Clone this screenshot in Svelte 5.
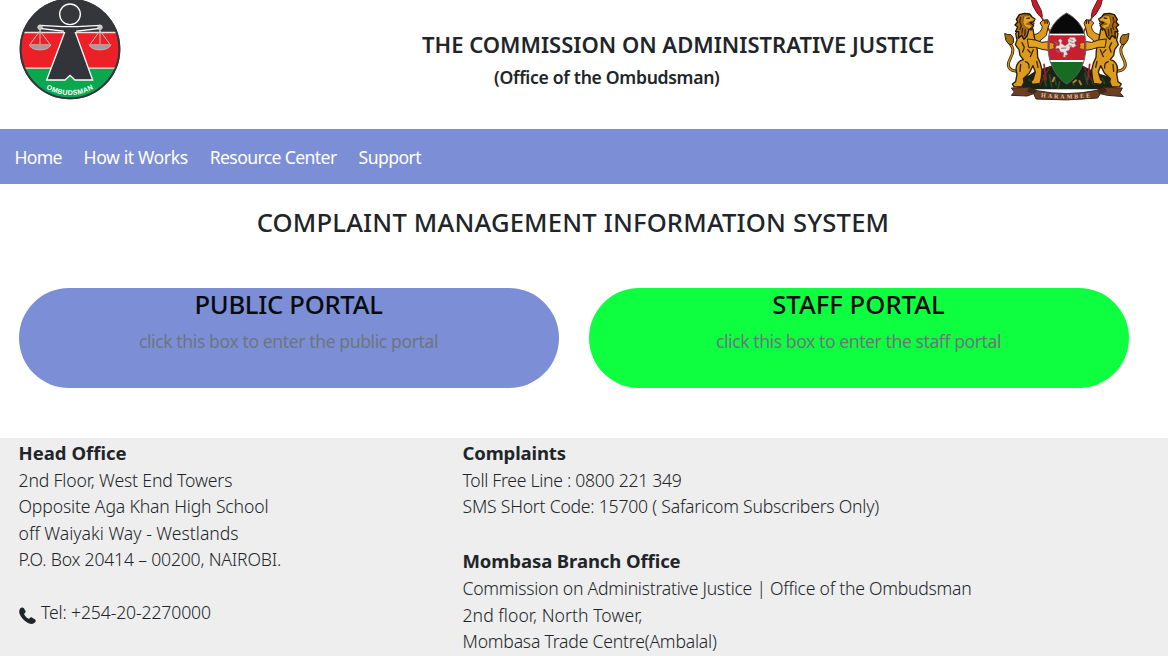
<script>
  const nav = [
    { label: 'Home', ls: -0.75 },
    { label: 'How it Works', ls: -0.4 },
    { label: 'Resource Center', ls: -0.62 },
    { label: 'Support', ls: -0.55 }
  ];

  const portals = [
    { kind: 'public', title: 'PUBLIC PORTAL', tls: -0.28, note: 'click this box to enter the public portal', ls: -0.41 },
    { kind: 'staff', title: 'STAFF PORTAL', tls: 0.05, note: 'click this box to enter the staff portal', ls: -0.44 }
  ];

  const columns = [
    [
      {
        title: 'Head Office',
        tls: 0.02,
        lines: [
          { text: '2nd Floor, West End Towers', ls: -0.14 },
          { text: 'Opposite Aga Khan High School', ls: -0.14 },
          { text: 'off Waiyaki Way - Westlands', ls: 0 },
          { text: 'P.O. Box 20414 – 00200, NAIROBI.', ls: -0.19 },
          { text: '', ls: 0 },
          { text: 'Tel: +254-20-2270000', ls: -0.14, phone: true }
        ]
      }
    ],
    [
      {
        title: 'Complaints',
        tls: -0.12,
        lines: [
          { text: 'Toll Free Line : 0800 221 349', ls: -0.28 },
          { text: 'SMS SHort Code: 15700 ( Safaricom Subscribers Only)', ls: -0.22 },
          { text: '', ls: 0 }
        ]
      },
      {
        title: 'Mombasa Branch Office',
        tls: -0.08,
        lines: [
          { text: 'Commission on Administrative Justice | Office of the Ombudsman', ls: -0.24 },
          { text: '2nd floor, North Tower,', ls: 0.05 },
          { text: 'Mombasa Trade Centre(Ambalal)', ls: -0.21 }
        ]
      }
    ]
  ];
</script>

<div class="page">
  <header>
    <svg class="seal" viewBox="0 0 360 315" aria-label="Ombudsman">
      <defs>
        <clipPath id="disc"><circle cx="180" cy="147" r="147" /></clipPath>
        <path id="arc" d="M44 175 A139 139 0 0 0 316 175" />
      </defs>
      <circle cx="180" cy="147" r="151" fill="#303237" />
      <g clip-path="url(#disc)">
        <rect x="28" y="0" width="304" height="97" fill="#35363b" />
        <rect x="28" y="97" width="304" height="107" fill="#ed2027" />
        <rect x="28" y="204" width="304" height="100" fill="#0ba650" />
        <path d="M28 97.500H332M28 204.500H332" stroke="#f3dfdf" stroke-width="4" />
      </g>
      <circle cx="180" cy="147" r="148" fill="none" stroke="#34363a" stroke-width="6" />
      <path d="M90 76 L158 80 H202 L270 76 V85 L195 94 L248 240 H195 L180 226 L165 240 H110 L165 94 L90 85Z" fill="#333439" stroke="#fff" stroke-width="4" />
      <path d="M163 85 H197 L199 96 H161Z" fill="#333439" />
      <circle cx="180" cy="43" r="31" fill="#36373b" stroke="#fff" stroke-width="4" />
      {#each [90, 270] as x}
        <g transform="translate({x} 0)" fill="none" stroke="#cfc0c0">
          <path d="M0 85 V133 M0 92 L-29 132 M0 92 L29 132" stroke-width="3" />
          <path d="M-33 134 H33 Q27 149 0 150 Q-27 149 -33 134Z" fill="#a49a9c" stroke-width="2" />
          <circle cy="82" r="7" fill="#c8c5c7" stroke="#e1dfe0" stroke-width="2" />
        </g>
      {/each}
      <text class="sealtext"><textPath href="#arc" startOffset="50%" text-anchor="middle">OMBUDSMAN</textPath></text>
    </svg>

    <div class="titles">
      <h1>THE COMMISSION ON ADMINISTRATIVE JUSTICE</h1>
      <h2>(Office of the Ombudsman)</h2>
    </div>

    <svg class="arms" viewBox="0 0 405 315" aria-label="Coat of arms">
      <defs>
        <g id="lion" stroke-linejoin="round" stroke-linecap="round">
          <path d="M120 44 L166 122 M132 193 L138 240" stroke="#a71d27" stroke-width="5" />
          <path d="M74 205 C62 219 28 216 25 196 C23 179 43 166 38 145 C36 137 29 132 27 124" fill="none" stroke="#3b2708" stroke-width="9" />
          <path d="M74 205 C62 219 28 216 25 196 C23 179 43 166 38 145 C36 137 29 132 27 124" fill="none" stroke="#d49419" stroke-width="4" />
          <path d="M15 101 Q23 105 33 104 Q42 111 41 126 L35 134 L26 132 L18 121Z" fill="#a66d10" stroke="#2d1c07" stroke-width="3" />
          <path d="M98 104 C115 104 124 94 127 80 L120 69 L128 61 L143 59 L149 70 L144 83 L139 106 L116 126 L93 132Z" fill="#dc9b1d" stroke="#2e1d04" stroke-width="3" />
          <path d="M60 82 L47 101 L51 120 L46 134 L57 149 L60 166 L70 179 C51 184 44 203 51 222 L47 245 L37 252 L42 260 L65 261 L72 247 L70 236 L88 219 L99 197 L106 216 L99 239 L92 244 L97 253 L120 250 L124 234 L126 210 L121 190 L113 172 L112 151 L102 106 L99 87Z" fill="#dc9b1d" stroke="#2e1d04" stroke-width="4" />
          <path d="M83 117 L106 120 L126 127 L151 124 L166 133 L164 146 L151 152 L126 148 L106 142 L87 142Z" fill="#e1a321" stroke="#2e1d04" stroke-width="3" />
          <path d="M58 44 L73 40 L89 42 L96 51 L105 57 L101 65 L90 68 L101 75 L97 84 L87 88 L81 108 L72 118 L65 106 L55 115 L56 95 L47 94 L53 81 L45 75 L53 66 L49 58Z" fill="#a86b10" stroke="#201303" stroke-width="4" />
          <path d="M73 48 L89 47 L96 54 L104 57 L100 63 L88 66 L79 72 L91 75 L96 80 L87 86 L75 80 L69 68Z" fill="#e3a42b" stroke="#59380a" stroke-width="1.500" />
          <path d="M81 55 L88 54 M94 66 L102 70 M62 52 L59 65 L64 77 L60 88 M68 85 L66 99 M76 88 L74 106 M66 128 L73 142 L68 156 M83 149 L91 158 M100 149 L91 170 M76 185 Q89 188 87 204 M62 193 L60 214 M110 184 L114 202 M135 62 V70 M141 62 L142 70 M153 130 L161 134 M151 140 L160 142 M96 83 L93 91" fill="none" stroke="#3d2404" stroke-width="4" />
          <path d="M93 -6 L99 18 L113 42 L124 52 L127 49 L124 32 L108 0 L104 -6Z" fill="#c01f2c" stroke="#691019" stroke-width="3" />
        </g>
      </defs>
      <path d="M56 242 L69 229 L87 226 L106 213 L130 205 L158 196 H245 L276 211 L299 221 L318 227 L333 228 L347 246 L337 263 L302 268 H95 L63 263Z" fill="#16251a" />
      <path d="M86 238 L95 246 M130 224 L139 260 M148 224 L156 262 M163 231 L169 257 M179 244 L174 267 M217 244 L223 258 M254 218 L263 255 M281 225 L288 250 M306 233 L314 252" stroke="#2d4c20" stroke-width="5" />
      <path d="M157 246 L164 231 M219 248 L230 239 M237 241 L244 255" stroke="#b08332" stroke-width="6" />
      <circle cx="112" cy="219" r="5" fill="#c6c3c1" /><circle cx="111" cy="246" r="5" fill="#99898a" />
      <circle cx="290" cy="219" r="5" fill="#c6c3c1" /><circle cx="282" cy="247" r="5" fill="#99898a" />
      <path d="M151 198 L119 255 M250 198 L284 255" stroke="#821c22" stroke-width="4" />
      <use href="#lion" />
      <use href="#lion" transform="translate(401 0) scale(-1 1)" />
      <clipPath id="shield"><path d="M200 39 C177 51 158 72 149 96 C140 128 143 169 155 196 C166 222 181 240 200 252 C219 240 236 222 247 196 C259 169 261 128 252 96 C243 72 223 51 200 39Z" /></clipPath>
      <g clip-path="url(#shield)">
        <rect x="140" y="35" width="120" height="68" fill="#090909" />
        <rect x="140" y="101" width="120" height="5" fill="#fff" />
        <rect x="140" y="106" width="120" height="74" fill="#c81e31" />
        <rect x="140" y="180" width="120" height="6" fill="#fff" />
        <rect x="140" y="186" width="120" height="70" fill="#176c24" />
      </g>
      <path d="M200 39 C177 51 158 72 149 96 C140 128 143 169 155 196 C166 222 181 240 200 252 C219 240 236 222 247 196 C259 169 261 128 252 96 C243 72 223 51 200 39Z" fill="none" stroke="#665f5a" stroke-width="3" />
      <path d="M174 121 L181 116 L187 122 L184 130 L195 137 L205 130 L203 119 L211 112 L224 112 L230 122 L223 128 L229 137 L220 143 L211 141 L208 151 L199 154 L204 164 L195 167 L199 172 L189 171 L191 158 L181 156 L176 145 L166 147 L169 137 L178 136 L179 128Z" fill="#eadfdc" stroke="#715353" stroke-width="1.500" />
      <path d="M209 119 L220 121 M209 127 L221 131 M206 137 L216 139 M183 145 L199 144 M164 126 L174 132 M168 151 L179 158" fill="none" stroke="#8f7778" stroke-width="3" />
      <path d="M149 127 L164 131 L160 138 L164 145 L149 149 M252 127 L237 131 L241 138 L237 145 L252 149" fill="#d99b20" stroke="#633b09" stroke-width="2" />
      <path d="M34 264 L85 262 L111 272 Q200 290 291 271 L315 262 L367 264 L360 278 L370 290 L322 286 L301 281 L293 294 Q200 304 108 297 L101 281 L81 288 L34 286 L43 276Z" fill="#6b3f24" stroke="#39251a" stroke-width="3" />
      <path d="M86 263 L112 270 L102 282 L81 275Z M315 262 L290 270 L300 282 L321 275Z" fill="#402719" />
      <path id="motto" d="M114 290 Q200 301 286 290" fill="none" />
      <text class="mottotext"><textPath href="#motto" startOffset="50%" text-anchor="middle">HARAMBEE</textPath></text>
    </svg>
  </header>

  <nav>
    {#each nav as item}
      <a href="#top" style="letter-spacing:{item.ls}px">{item.label}</a>
    {/each}
  </nav>

  <main>
    <h3>COMPLAINT MANAGEMENT INFORMATION SYSTEM</h3>
    <div class="portals">
      {#each portals as p}
        <div class="portal {p.kind}">
          <h4 style="letter-spacing:{p.tls}px">{p.title}</h4>
          <p style="letter-spacing:{p.ls}px">{p.note}</p>
        </div>
      {/each}
    </div>
  </main>

  <footer>
    {#each columns as blocks}
      <div>
        {#each blocks as b}
          <h5 style="letter-spacing:{b.tls}px">{b.title}</h5>
          {#each b.lines as line}
            <div class="line" style="letter-spacing:{line.ls}px">
              {#if line.phone}
                <svg class="phone" viewBox="0 0 16 16"><path d="M1.1 1.500 C2 .2 3.700 0 4.600 1.200 L6 3.600 C6.500 4.500 6.200 5.300 5.300 5.900 C4.800 6.300 4.800 6.700 5.100 7.200 C6 8.800 7.200 10 8.800 10.900 C9.300 11.200 9.700 11.100 10.100 10.600 C10.700 9.800 11.500 9.500 12.400 10 L14.900 11.500 C16.100 12.300 16 13.800 14.800 14.900 C12.900 16.600 9.900 16.100 6.600 13.800 C3.700 11.800 1.600 9.300 .6 6.600 C-.1 4.700 .1 2.900 1.100 1.500Z" /></svg>
              {/if}
              {line.text}
            </div>
          {/each}
        {/each}
      </div>
    {/each}
  </footer>
</div>

<style>
  :global(body) { margin: 0; overflow: hidden; }
  .page {
    display: flex;
    flex-direction: column;
    height: 656px;
    overflow: hidden;
    background: #fff;
    color: #212529;
    font-family: 'Noto Sans', sans-serif;
    font-size: 17.6px;
    white-space: nowrap;
  }
  h1, h2, h3, h4, h5, p { margin: 0; }
  header { display: flex; height: 129px; flex: none; }
  .seal { width: 120px; height: 105px; margin-left: 10px; }
  .titles { margin-left: 292px; width: 514px; padding-top: 28px; }
  h1 { font-size: 22px; line-height: 32px; font-weight: 600; }
  h2 { font-size: 17.6px; line-height: 26px; padding: 4px 0 0 72px; font-weight: 600; letter-spacing: -0.31px; }
  .arms { width: 135px; height: 105px; margin-left: 64px; }
  .sealtext { fill: #fff; font: 700 21px 'Liberation Sans', sans-serif; letter-spacing: 1px; }
  .mottotext { fill: #e0c5b1; font: 700 18px 'Liberation Serif', serif; letter-spacing: 6px; }
  nav {
    display: flex;
    align-items: center;
    gap: 22px;
    flex: none;
    height: 55px;
    box-sizing: border-box;
    padding: 0 14.500px 0;
    background: #7c8fd6;
  }
  nav a { color: #fff; text-decoration: none; }
  main { flex: none; height: 254px; }
  h3 {
    padding: 23px 22px 0 0;
    text-align: center;
    font-size: 25.6px;
    line-height: 32px;
    font-weight: 500;
    letter-spacing: 0.18px;
  }
  .portals { display: grid; grid-template-columns: 540px 540px; gap: 30px; padding: 49px 0 0 19px; }
  .portal { height: 100px; border-radius: 50px; text-align: center; }
  .public { background: #7c8fd6; }
  .staff { background: #0eff40; }
  h4 { color: #080b10; font-size: 25.6px; line-height: 34px; font-weight: 500; padding-right: 1px; }
  .portal p { color: #6c757d; line-height: 26px; padding: 6px 1px 0 0; }
  footer {
    display: grid;
    grid-template-columns: 444px 1fr;
    flex: 1;
    padding: 1px 18.500px 0;
    background: #eee;
  }
  h5 { font-size: 18.500px; line-height: 28px; font-weight: 700; }
  .line + h5 { line-height: 29px; }
  .line { height: 26.400px; line-height: 26.400px; font-weight: 300; }
  .phone { width: 17px; height: 17px; margin-right: 1px; vertical-align: -5px; fill: #212529; }
</style>
